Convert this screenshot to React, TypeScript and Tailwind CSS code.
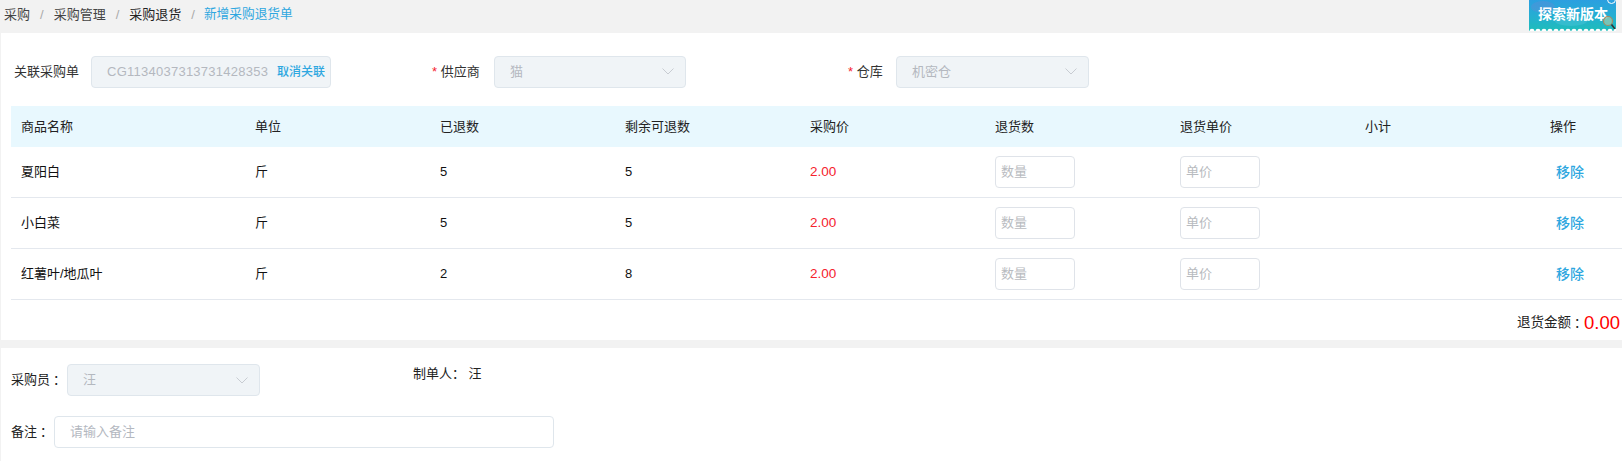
const font = { fontFamily: '"Liberation Sans", "Noto Sans CJK SC", sans-serif' };

const rows = [
  { name: "夏阳白", unit: "斤", returned: 5, left: 5 },
  { name: "小白菜", unit: "斤", returned: 5, left: 5 },
  { name: "红薯叶/地瓜叶", unit: "斤", returned: 2, left: 8 },
];

const gridCols = "grid grid-cols-[234px_185px_185px_185px_185px_185px_185px_185px_82px] items-center";

function Chevron() {
  return (
    <svg width="12" height="7" viewBox="0 0 12 7" fill="none" stroke="#c8ccd2" strokeWidth="1">
      <path d="M0.5 0.5l5.5 5.5 5.5-5.5" />
    </svg>
  );
}

function DisabledSelect({ value, width }: { value: string; width: string }) {
  return (
    <div className={`${width} h-8 flex items-center justify-between pl-[15px] pr-[11px] bg-[#f0f4f7] border border-[#dfe6ec] rounded text-[13px] text-[#b4b8bf]`}>
      <span>{value}</span>
      <Chevron />
    </div>
  );
}

function Banner() {
  return (
    <div className="relative w-[87px] h-[31px] overflow-hidden bg-gradient-to-b from-[#2b9fe0] via-[#25aed2] to-[#1fbdb9] flex items-center pl-[9px] pb-[3px]">
      <svg className="absolute left-0 top-0" width="87" height="31" viewBox="0 0 87 31" fill="none">
        <ellipse cx="14" cy="7" rx="12" ry="6" fill="#5b8fd8" fillOpacity="0.45" />
        <ellipse cx="42" cy="21" rx="16" ry="5" fill="#58c8e0" fillOpacity="0.35" />
      </svg>
      <span className="relative text-[14px] font-bold text-white leading-none whitespace-nowrap">探索新版本</span>
      <div className="absolute -top-[5px] right-0 w-[9px] h-[9px] rounded-full border border-white" />
      <svg className="absolute right-0 bottom-0" width="16" height="16" viewBox="0 0 16 16" fill="none">
        <circle cx="8" cy="6" r="4.5" fill="#8cc9b4" fillOpacity="0.8" stroke="#a98a60" strokeWidth="1.2" />
        <path d="M11.5 9.5l3.5 4.5" stroke="#333" strokeWidth="1.6" />
      </svg>
      <svg className="absolute left-0 bottom-0" width="87" height="3" viewBox="0 0 87 3" fill="#ffffff">
        {Array.from({ length: 15 }).map((_, i) => (
          <circle key={i} cx={i * 6 + 3} cy="3.4" r="2.6" />
        ))}
      </svg>
    </div>
  );
}

export default function App() {
  return (
    <div className="w-[1622px] h-[461px] overflow-hidden bg-[#f2f2f2] text-[13px] text-[#333]" style={font}>
      {/* Breadcrumb */}
      <div className="h-[33px] flex justify-between">
        <div className="flex items-center gap-[10px] pl-1 pb-1">
          <span className="text-[#444]">采购</span>
          <span className="text-[#aaa]">/</span>
          <span className="text-[#444]">采购管理</span>
          <span className="text-[#aaa]">/</span>
          <span className="text-[#222]">采购退货</span>
          <span className="text-[#aaa]">/</span>
          <span className="text-[12.7px] -ml-px text-[#2ea7e0]">新增采购退货单</span>
        </div>
        <div className="pr-[6px]">
          <Banner />
        </div>
      </div>

      {/* Main card */}
      <div className="ml-px h-[307px] bg-white">
        <div className="flex items-center h-[73px] pt-1 pl-[13px]">
          <span className="w-[77px]">关联采购单</span>
          <div className="w-[240px] h-8 flex items-center justify-between pl-[15px] pr-[5px] bg-[#f0f4f7] border border-[#dfe6ec] rounded">
            <span className="text-[#b4b8bf] tracking-[0.25px]">CG1134037313731428353</span>
            <span className="text-[12px] font-medium text-[#2ea7e0]">取消关联</span>
          </div>
          <span className="ml-[101px] w-[62px]"><span className="text-[#f5222d]">*</span> 供应商</span>
          <DisabledSelect value="猫" width="w-[192px]" />
          <span className="ml-[162px] w-[48px]"><span className="text-[#f5222d]">*</span> 仓库</span>
          <DisabledSelect value="机密仓" width="w-[193px]" />
        </div>

        {/* Table */}
        <div className="ml-[10px]">
          <div className={`${gridCols} h-[41px] bg-[#e8f8fe] text-[#222]`}>
            {["商品名称", "单位", "已退数", "剩余可退数", "采购价", "退货数", "退货单价", "小计", "操作"].map((title) => (
              <div key={title} className="pl-[10px]">{title}</div>
            ))}
          </div>
          {rows.map((row) => (
            <div key={row.name} className={`${gridCols} h-[51px] border-b border-[#e4e8ee] text-[#111]`}>
              <div className="pl-[10px]">{row.name}</div>
              <div className="pl-[10px]">{row.unit}</div>
              <div className="pl-[10px]">{row.returned}</div>
              <div className="pl-[10px]">{row.left}</div>
              <div className="pl-[10px] text-[13.5px] text-[#f5222d]">2.00</div>
              <div className="pl-[10px]">
                <div className="w-[80px] h-8 flex items-center pl-[5px] border border-[#dfe3e9] rounded text-[#b8bbc0]">数量</div>
              </div>
              <div className="pl-[10px]">
                <div className="w-[80px] h-8 flex items-center pl-[5px] border border-[#dfe3e9] rounded text-[#b8bbc0]">单价</div>
              </div>
              <div />
              <div className="pl-4 text-[14px] font-medium text-[#2ea7e0]">移除</div>
            </div>
          ))}
          <div className="h-[40px] flex items-center justify-end pt-[6px] pr-[2px]">
            <span className="text-[13.5px] text-[#222]">退货金额</span>
            <span className="ml-[3px] -mr-[3px] text-[#222]">：</span>
            <span className="text-[18.5px] leading-none text-[#ff0000]">0.00</span>
          </div>
        </div>
      </div>

      {/* Bottom card */}
      <div className="ml-px mt-2 h-[113px] bg-white pl-[10px]">
        <div className="flex pt-[16px]">
          <div className="flex items-center text-[#222]">
            <span className="w-[56px] whitespace-nowrap">采购员<span className="ml-[3px]">：</span></span>
            <DisabledSelect value="汪" width="w-[193px]" />
          </div>
          <div className="ml-[153px] text-[#222]">制单人： 汪</div>
        </div>
        <div className="flex items-center mt-5 text-[#222]">
          <span className="w-[43px] whitespace-nowrap">备注<span className="ml-[3px]">：</span></span>
          <div className="w-[500px] h-8 flex items-center pl-[15px] border border-[#dfe6ec] rounded text-[#b4b8bf]">请输入备注</div>
        </div>
      </div>
    </div>
  );
}
